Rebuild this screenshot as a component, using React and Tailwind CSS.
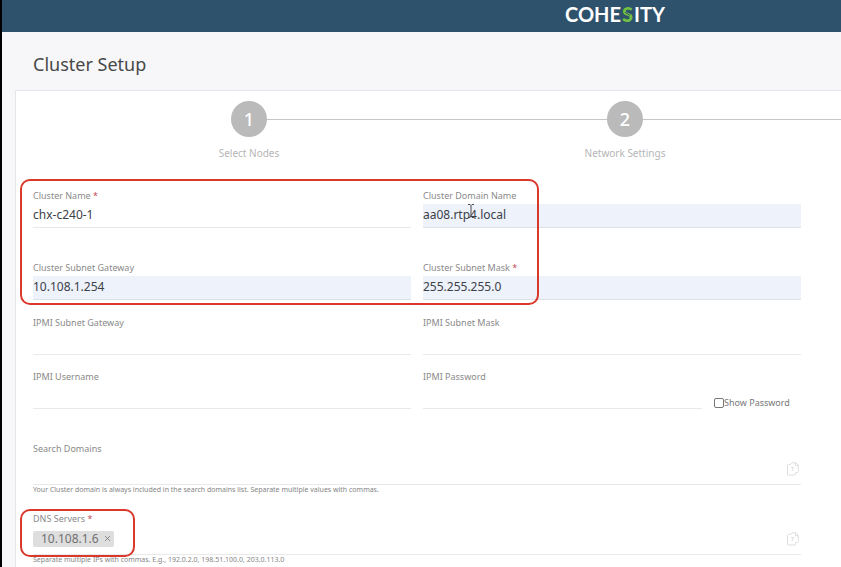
import { useState } from "react";
import { X } from "lucide-react";

const steps = [
  { id: 1, label: "Select Nodes" },
  { id: 2, label: "Network Settings" },
];

const Logo = () => (
  <div
    className="flex items-center font-['Lato'] text-xl font-bold leading-7 text-white"
    aria-label="Cohesity"
  >
    <span>COHE</span>
    <span className="relative px-px font-black text-[#72c043]">
      S
      <svg viewBox="0 0 12 28" className="absolute inset-0 h-full w-full" fill="none">
        <path d="M3.500 12.200 L8.500 15.600" stroke="#2f526c" strokeWidth="0.9" />
      </svg>
    </span>
    <span>ITY</span>
  </div>
);

const Highlight = ({ className }) => (
  <div
    className={`pointer-events-none absolute rounded-[10px] border-2 border-[#d9382a] ${className}`}
  />
);

const Label = ({ htmlFor, required, children }) => (
  <label htmlFor={htmlFor} className="block text-[9px] leading-4 text-[#8a8a8a]">
    {children}
    {required && <span className="text-[#c4505a]"> *</span>}
  </label>
);

const Field = ({ id, label, required, value = "", type = "text", filled }) => {
  const [text, setText] = useState(value);

  return (
    <div className="min-w-0 flex-1">
      <Label htmlFor={id} required={required}>
        {label}
      </Label>
      <input
        id={id}
        type={type}
        value={text}
        onChange={(e) => setText(e.target.value)}
        className={`block h-6 w-full border-b pb-0.5 text-xs text-[#3c4048] outline-none ${
          filled ? "border-[#dde2ea] bg-[#edf2fb]" : "border-[#e9e9e9] bg-transparent"
        }`}
      />
    </div>
  );
};

const CopyIcon = () => (
  <svg
    viewBox="0 0 12 14"
    className="h-3.5 w-3"
    fill="none"
    stroke="#dedede"
    strokeWidth="1"
    strokeLinejoin="round"
  >
    <path d="M3.500 2.500H1.500a1 1 0 0 0-1 1v8.500a1 1 0 0 0 1 1h6a1 1 0 0 0 1-1v-1" />
    <path d="M3.500 2.500 5 .8h4l2.300 2.400v6.300a1 1 0 0 1-1 1H8.500" />
    <path d="M8.500 1v2.700h2.700M4 5.500h2.500L5 9" />
  </svg>
);

const ListField = ({ id, label, required, hint, tags = [] }) => (
  <div>
    <Label htmlFor={id} required={required}>
      {label}
    </Label>
    <div className="flex h-7 items-center border-b border-[#e9e9e9] pb-1">
      {tags.map((tag) => (
        <span
          key={tag}
          className="flex h-4 items-center gap-1 rounded-xs bg-[#dedede] pr-0.5 pl-2 text-xs text-[#707070]"
        >
          {tag}
          <button type="button" aria-label={`Remove ${tag}`}>
            <X size={9} strokeWidth={2} />
          </button>
        </span>
      ))}
      <input id={id} type="text" className="h-full min-w-0 flex-1 text-xs outline-none" />
      <button type="button" aria-label={`Copy ${label}`} className="pr-0.5">
        <CopyIcon />
      </button>
    </div>
    <p className="text-[7px] leading-[10px] text-[#858585]">{hint}</p>
  </div>
);

const Stepper = () => (
  <ol className="flex overflow-hidden pl-[45px]">
    {steps.map((step, index) => (
      <li key={step.id} className="w-[376px] shrink-0">
        <div className="flex items-center">
          <span className={`h-px flex-1 ${index > 0 ? "bg-[#c6c6c6]" : ""}`} />
          <span className="flex size-9 items-center justify-center rounded-full bg-[#bababa] text-lg font-medium text-white">
            {step.id}
          </span>
          <span className="h-px flex-1 bg-[#c6c6c6]" />
        </div>
        <p className="mt-2 text-center text-[10px] leading-4 text-[#b5b5b5]">
          {step.label}
        </p>
      </li>
    ))}
    <li className="flex h-9 flex-1 items-center" aria-hidden="true">
      <span className="h-px flex-1 bg-[#c6c6c6]" />
    </li>
  </ol>
);

const App = () => {
  const [showPassword, setShowPassword] = useState(false);

  return (
    <div className="flex min-h-screen flex-col overflow-hidden border-l-2 border-black bg-[#f7f7fa] font-['Noto_Sans',sans-serif]">
      <header className="flex h-8 items-start justify-center bg-[#2f526c] pl-[387px]">
        <Logo />
      </header>

      <h1 className="px-[31px] pt-[18px] pb-3 text-lg leading-7 text-[#484848]">
        Cluster Setup
      </h1>

      <main className="ml-[13px] flex-1 border-t border-l border-[#e3e6ea] bg-white pt-2.5">
        <Stepper />

        <form className="max-w-[802px] px-[17px] pt-[27px]">
          <div className="relative flex flex-col gap-8">
            <div className="flex gap-3">
              <Field id="name" label="Cluster Name" required value="chx-c240-1" />
              <Field id="domain" label="Cluster Domain Name" value="aa08.rtp4.local" filled />
            </div>
            <div className="flex gap-3">
              <Field id="gateway" label="Cluster Subnet Gateway" value="10.108.1.254" filled />
              <Field id="mask" label="Cluster Subnet Mask" required value="255.255.255.0" filled />
            </div>
            <Highlight className="-top-[9px] -left-[13px] h-[126px] w-[519px]" />
            <svg
              viewBox="0 0 8 14"
              className="pointer-events-none absolute top-4 left-[434px] h-3.5 w-2"
              fill="none"
              stroke="#4a4a4a"
            >
              <path d="M1 .5h2L4 1.500 5 .5h2M4 1.500v11M1 13.500h2l1-1 1 1h2" />
            </svg>
          </div>

          <div className="mt-[15px] flex flex-col gap-3.5">
            <div className="flex gap-3">
              <Field id="ipmi-gateway" label="IPMI Subnet Gateway" />
              <Field id="ipmi-mask" label="IPMI Subnet Mask" />
            </div>
            <div className="flex gap-3">
              <Field id="ipmi-user" label="IPMI Username" />
              <div className="flex min-w-0 flex-1 items-end gap-3">
                <Field
                  id="ipmi-password"
                  label="IPMI Password"
                  type={showPassword ? "text" : "password"}
                />
                <label className="flex w-[87px] items-center text-[9px] leading-3 text-[#777]">
                  <input
                    type="checkbox"
                    checked={showPassword}
                    onChange={(e) => setShowPassword(e.target.checked)}
                    className="size-2.5 appearance-none rounded-xs border border-[#777] checked:bg-[#777]"
                  />
                  Show Password
                </label>
              </div>
            </div>
          </div>

          <div className="mt-8 flex flex-col gap-4">
            <ListField
              id="search-domains"
              label="Search Domains"
              hint="Your Cluster domain is always included in the search domains list. Separate multiple values with commas."
            />
            <div className="relative">
              <ListField
                id="dns"
                label="DNS Servers"
                required
                tags={["10.108.1.6"]}
                hint="Separate multiple IPs with commas. E.g., 192.0.2.0, 198.51.100.0, 203.0.113.0"
              />
              <Highlight className="-top-0.5 -left-[13px] h-12 w-[115px]" />
            </div>
          </div>
        </form>
      </main>
    </div>
  );
};

export default App;
